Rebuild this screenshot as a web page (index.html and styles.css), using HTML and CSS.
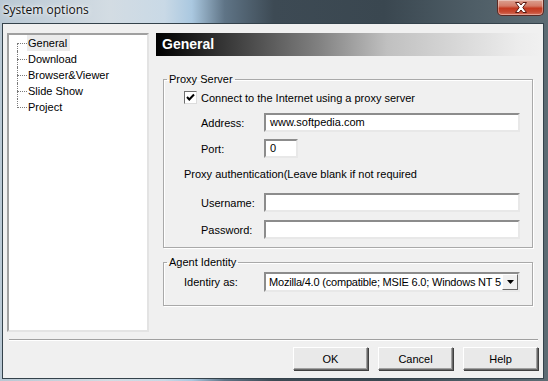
FILE: index.html
```html
<!DOCTYPE html>
<html lang="en">
<head>
    <meta charset="UTF-8">
    <meta name="viewport" content="width=device-width, initial-scale=1.0">
    <title>System options</title>
    <link rel="stylesheet" href="styles.css">
</head>
<body>
    <div class="window">
        <div class="titlebar">
            <span class="title">System options</span>
            <div class="close-btn">
                <svg width="14" height="11" viewBox="0 0 14 11">
                    <path d="M1.5 0.5 H5 L7 3 L9 0.5 H12.5 L8.8 5.5 L12.5 10.5 H9 L7 8 L5 10.5 H1.5 L5.2 5.5 Z" fill="#fff" stroke="#5a1a12" stroke-width="1"/>
                </svg>
            </div>
        </div>

        <div class="client">
            <div class="main">
                <!-- left tree -->
                <div class="tree">
                    <div class="tree-item first selected">
                        <span class="branch"></span>
                        <span class="tree-label">General</span>
                    </div>
                    <div class="tree-item">
                        <span class="branch"></span>
                        <span class="tree-label">Download</span>
                    </div>
                    <div class="tree-item">
                        <span class="branch"></span>
                        <span class="tree-label">Browser&amp;Viewer</span>
                    </div>
                    <div class="tree-item">
                        <span class="branch"></span>
                        <span class="tree-label">Slide Show</span>
                    </div>
                    <div class="tree-item last">
                        <span class="branch"></span>
                        <span class="tree-label">Project</span>
                    </div>
                </div>

                <!-- right page -->
                <div class="page">
                    <div class="page-header">General</div>

                    <fieldset class="group proxy-group">
                        <legend>Proxy Server</legend>
                        <div class="check-row">
                            <span class="checkbox">
                                <svg width="11" height="11" viewBox="0 0 11 11">
                                    <path d="M2 5 L4.3 7.5 L9 2.5" fill="none" stroke="#000" stroke-width="2"/>
                                </svg>
                            </span>
                            <span>Connect to the Internet using a proxy server</span>
                        </div>
                        <div class="field-row address-row">
                            <label class="field-label">Address:</label>
                            <div class="textbox">www.softpedia.com</div>
                        </div>
                        <div class="field-row port-row">
                            <label class="field-label">Port:</label>
                            <div class="textbox port">0</div>
                        </div>
                        <div class="auth-note">Proxy authentication(Leave blank if not required</div>
                        <div class="field-row user-row">
                            <label class="field-label">Username:</label>
                            <div class="textbox"></div>
                        </div>
                        <div class="field-row pass-row">
                            <label class="field-label">Password:</label>
                            <div class="textbox"></div>
                        </div>
                    </fieldset>

                    <fieldset class="group agent-group">
                        <legend>Agent Identity</legend>
                        <div class="field-row agent-row">
                            <label class="field-label wide">Identiry as:</label>
                            <div class="select">
                                <span class="select-text">Mozilla/4.0 (compatible; MSIE 6.0; Windows NT 5</span>
                                <span class="select-btn">
                                    <svg width="7" height="4" viewBox="0 0 7 4"><path d="M0 0 H7 L3.5 4 Z" fill="#000"/></svg>
                                </span>
                            </div>
                        </div>
                    </fieldset>
                </div>
            </div>

            <div class="separator"></div>

            <div class="buttons">
                <button class="btn">OK</button>
                <button class="btn">Cancel</button>
                <button class="btn">Help</button>
            </div>
        </div>
    </div>
</body>
</html>
```

FILE: styles.css
```css
* {
    margin: 0;
    padding: 0;
    box-sizing: border-box;
}

body {
    width: 548px;
    height: 381px;
    overflow: hidden;
    font-family: 'Liberation Sans', Arial, sans-serif;
    font-size: 11px;
    color: #000;
}

.window {
    width: 548px;
    height: 381px;
    display: flex;
    flex-direction: column;
    padding: 0 4px 2px 2px;
    background: linear-gradient(90deg, #b9c8d4 0, #d3dce3 20%, #c9d9e6 30%, #aac8e0 35%, #5f7486 41%, #3d4a54 50%, #3a4750 70%, #4d5c65 85%, #5d6c74 100%);
}

/* title bar */
.titlebar {
    height: 23px;
    display: flex;
    align-items: flex-start;
}

.title {
    font-family: 'Open Sans', 'Liberation Sans', sans-serif;
    font-size: 12px;
    line-height: 20px;
    padding-left: 1px;
    color: #111;
    text-shadow: 0 0 6px rgba(255, 255, 255, 0.9), 0 0 3px rgba(255, 255, 255, 0.9);
}

.close-btn {
    margin-left: auto;
    width: 47px;
    height: 16px;
    display: flex;
    align-items: center;
    justify-content: center;
    border: 1px solid #5b2a24;
    border-top: none;
    border-radius: 0 0 5px 5px;
    background: linear-gradient(#dba090 0, #d47a66 40%, #c4391f 55%, #c64a33 80%, #d87560 100%);
    box-shadow: inset 0 0 0 1px rgba(255, 255, 255, 0.35);
}

/* client area */
.client {
    flex: 1;
    display: flex;
    flex-direction: column;
    background-color: #f0f0f0;
    border: 1px solid #34424b;
    padding: 9px 2px 0 4px;
}

.main {
    height: 299px;
    display: flex;
    gap: 7px;
}

/* tree */
.tree {
    width: 142px;
    background-color: #fff;
    border: 2px solid;
    border-color: #a0a0a0 #e3e3e3 #e3e3e3 #a0a0a0;
}

.tree-item {
    height: 16px;
    display: flex;
    align-items: center;
}

.branch {
    position: relative;
    width: 18px;
    height: 16px;
}

.branch::before {
    content: '';
    position: absolute;
    left: 8px;
    top: 8px;
    width: 10px;
    border-top: 1px dotted #7a7a7a;
}

.branch::after {
    content: '';
    position: absolute;
    left: 8px;
    top: 0;
    height: 16px;
    border-left: 1px dotted #7a7a7a;
}

.tree-item.first .branch::after {
    top: 8px;
    height: 8px;
}

.tree-item.last .branch::after {
    height: 9px;
}

.tree-label {
    line-height: 16px;
    padding: 0 3px 0 1px;
}

.tree-item.selected .tree-label {
    background-color: #ebebeb;
}

/* right page */
.page {
    flex: 1;
    display: flex;
    flex-direction: column;
}

.page-header {
    height: 23px;
    line-height: 23px;
    padding-left: 6px;
    font-size: 14px;
    font-weight: bold;
    color: #fff;
    background: linear-gradient(90deg, #000 0, #808080 42%, #c0c0c0 60%, #ececec 94%, #f0f0f0 100%);
}

.group {
    width: 370px;
    margin-left: 7px;
    border: 1px solid #a9a9a9;
    box-shadow: 1px 1px 0 #fff, inset 1px 1px 0 #fff;
    padding: 0 0 0 20px;
}

.group legend {
    margin-left: -17px;
    padding: 0 2px;
    line-height: 14px;
}

.proxy-group {
    margin-top: 16px;
    padding-bottom: 8px;
}

.agent-group {
    margin-top: 7px;
    padding-bottom: 13px;
}

.check-row {
    margin-top: 5px;
    height: 13px;
    display: flex;
    align-items: center;
    gap: 4px;
}

.checkbox {
    width: 13px;
    height: 13px;
    display: flex;
    align-items: center;
    justify-content: center;
    background-color: #fff;
    border: 1px solid;
    border-color: #707070 #dcdcdc #dcdcdc #707070;
}

.field-row {
    display: flex;
    align-items: center;
}

.field-label {
    width: 63px;
    margin-left: 17px;
}

.field-label.wide {
    width: 80px;
    margin-left: 0;
}

.textbox {
    width: 256px;
    height: 19px;
    line-height: 15px;
    padding-left: 4px;
    background-color: #fff;
    border: 2px solid;
    border-color: #8c8c8c #e8e8e8 #e8e8e8 #8c8c8c;
}

.textbox.port {
    width: 34px;
}

.address-row { margin-top: 9px; }
.port-row { margin-top: 7px; }
.user-row { margin-top: 12px; }
.pass-row { margin-top: 8px; }
.agent-row { margin-top: 3px; }

.auth-note {
    margin-top: 9px;
    line-height: 14px;
}

.select {
    width: 256px;
    height: 20px;
    display: flex;
    align-items: center;
    background-color: #fff;
    border: 2px solid;
    border-color: #8c8c8c #e8e8e8 #e8e8e8 #8c8c8c;
}

.select-text {
    flex: 1;
    white-space: nowrap;
    letter-spacing: -0.2px;
    padding-left: 3px;
}

.select-btn {
    width: 16px;
    height: 16px;
    display: flex;
    align-items: center;
    justify-content: center;
    background-color: #f0f0f0;
    border: 1px solid;
    border-color: #fff #696969 #696969 #fff;
}

/* bottom */
.separator {
    margin: 7px 3px 0 2px;
    border-top: 1px solid #a0a0a0;
    border-bottom: 1px solid #fff;
}

.buttons {
    margin-top: 6px;
    padding-right: 3px;
    display: flex;
    justify-content: flex-end;
    gap: 10px;
}

.btn {
    width: 75px;
    height: 23px;
    font-family: 'Liberation Sans', Arial, sans-serif;
    font-size: 11px;
    color: #000;
    background-color: #e9e9e9;
    border: 1px solid;
    border-color: #fff #696969 #696969 #fff;
    box-shadow: 1px 1px 0 #404040, inset -1px -1px 0 #a0a0a0;
}
```
